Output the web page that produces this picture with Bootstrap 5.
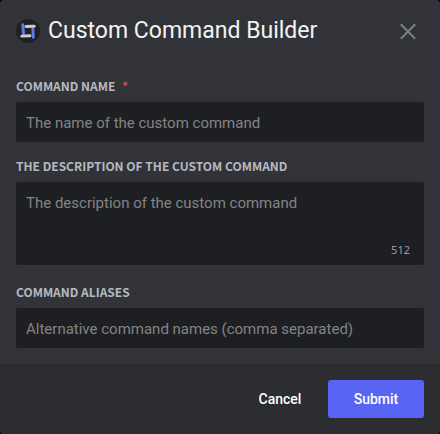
<!DOCTYPE html>
<html lang="en">
<head>
<meta charset="utf-8">
<meta name="viewport" content="width=device-width, initial-scale=1">
<title>Custom Command Builder</title>
<link href="https://cdn.jsdelivr.net/npm/bootstrap@5.3.0/dist/css/bootstrap.min.css" rel="stylesheet">
<style>
  body { background: #000; font-family: Roboto, sans-serif; }
  .builder { background: #313338; border-radius: 4px; overflow: hidden; }
  .builder-title { font-size: 23px; line-height: 30px; color: #f2f3f5; font-weight: 400; }
  .close-btn { color: #7c7f86; line-height: 0; padding: 3px 4px; }
  .field-label { font-family: "Noto Sans CJK SC", "Noto Sans", sans-serif; font-size: 12px; line-height: 16px; font-weight: 700; color: #b5bac1; text-transform: uppercase; }
  .required-mark { color: #f23f42; }
  .field-input, .field-input:focus { background: #1e1f22; color: #dbdee1; border-radius: 3px; font-size: 15px; line-height: 20px; padding: 11px 10px 9px; }
  .field-input::placeholder { color: #828487; opacity: 1; }
  textarea.field-input { height: 83px; resize: none; }
  .description-box { margin-bottom: 3px; }
  .char-count { right: 14px; bottom: 7px; font-family: "Noto Sans", sans-serif; font-size: 11px; line-height: 16px; color: #949ba4; }
  .builder-footer { background: #2b2d31; }
  .action-btn { width: 96px; height: 38px; border-radius: 3px; font-size: 14px; line-height: 16px; font-weight: 500; color: #fff; }
  .action-btn:hover { color: #fff; }
  .submit-btn, .submit-btn:hover { background: #5865f2; }
</style>
</head>
<body>
<form class="builder min-vh-100 d-flex flex-column" onsubmit="return false">
  <header class="d-flex align-items-center gap-2 p-3">
    <svg width="24" height="24" viewBox="0 0 24 24" class="flex-shrink-0" aria-hidden="true">
      <circle cx="12" cy="12" r="12" fill="#1f2023"/>
      <g fill="none" stroke-width="2.9" stroke-linecap="round">
        <path d="M6.8 5.8 L7.5 15" stroke="#6379ee"/>
        <path d="M16.9 9.5 L17.3 18.4" stroke="#6379ee"/>
        <path d="M10 7.5 L18.2 7.2" stroke="#cfccca"/>
        <path d="M5.7 17.1 L14 16.7" stroke="#cfccca"/>
      </g>
    </svg>
    <h1 class="builder-title mb-0 flex-grow-1">Custom Command Builder</h1>
    <button type="button" class="close-btn btn border-0" aria-label="Close">
      <svg width="24" height="24" viewBox="0 0 24 24" fill="none" stroke="currentColor" stroke-width="2" aria-hidden="true"><path d="M4.8 5.3 L19.2 19.7 M19.2 5.3 L4.8 19.7"/></svg>
    </button>
  </header>
  <div class="flex-grow-1 d-flex flex-column gap-3 p-3">
    <div>
      <label class="field-label d-block mb-2" for="name">Command name <span class="required-mark ms-1">*</span></label>
      <input class="field-input form-control border-0 shadow-none" id="name" type="text" placeholder="The name of the custom command" required>
    </div>
    <div>
      <label class="field-label d-block mb-2" for="description">The description of the custom command</label>
      <div class="description-box position-relative">
        <textarea class="field-input form-control border-0 shadow-none" id="description" maxlength="512" placeholder="The description of the custom command"></textarea>
        <span class="char-count position-absolute">512</span>
      </div>
    </div>
    <div>
      <label class="field-label d-block mb-2" for="aliases">Command aliases</label>
      <input class="field-input form-control border-0 shadow-none" id="aliases" type="text" placeholder="Alternative command names (comma separated)">
    </div>
  </div>
  <footer class="builder-footer d-flex justify-content-end p-3">
    <button type="button" class="action-btn btn border-0 p-0">Cancel</button>
    <button type="submit" class="action-btn submit-btn btn border-0 p-0">Submit</button>
  </footer>
</form>
<script src="https://cdn.jsdelivr.net/npm/bootstrap@5.3.0/dist/js/bootstrap.bundle.min.js"></script>
</body>
</html>
